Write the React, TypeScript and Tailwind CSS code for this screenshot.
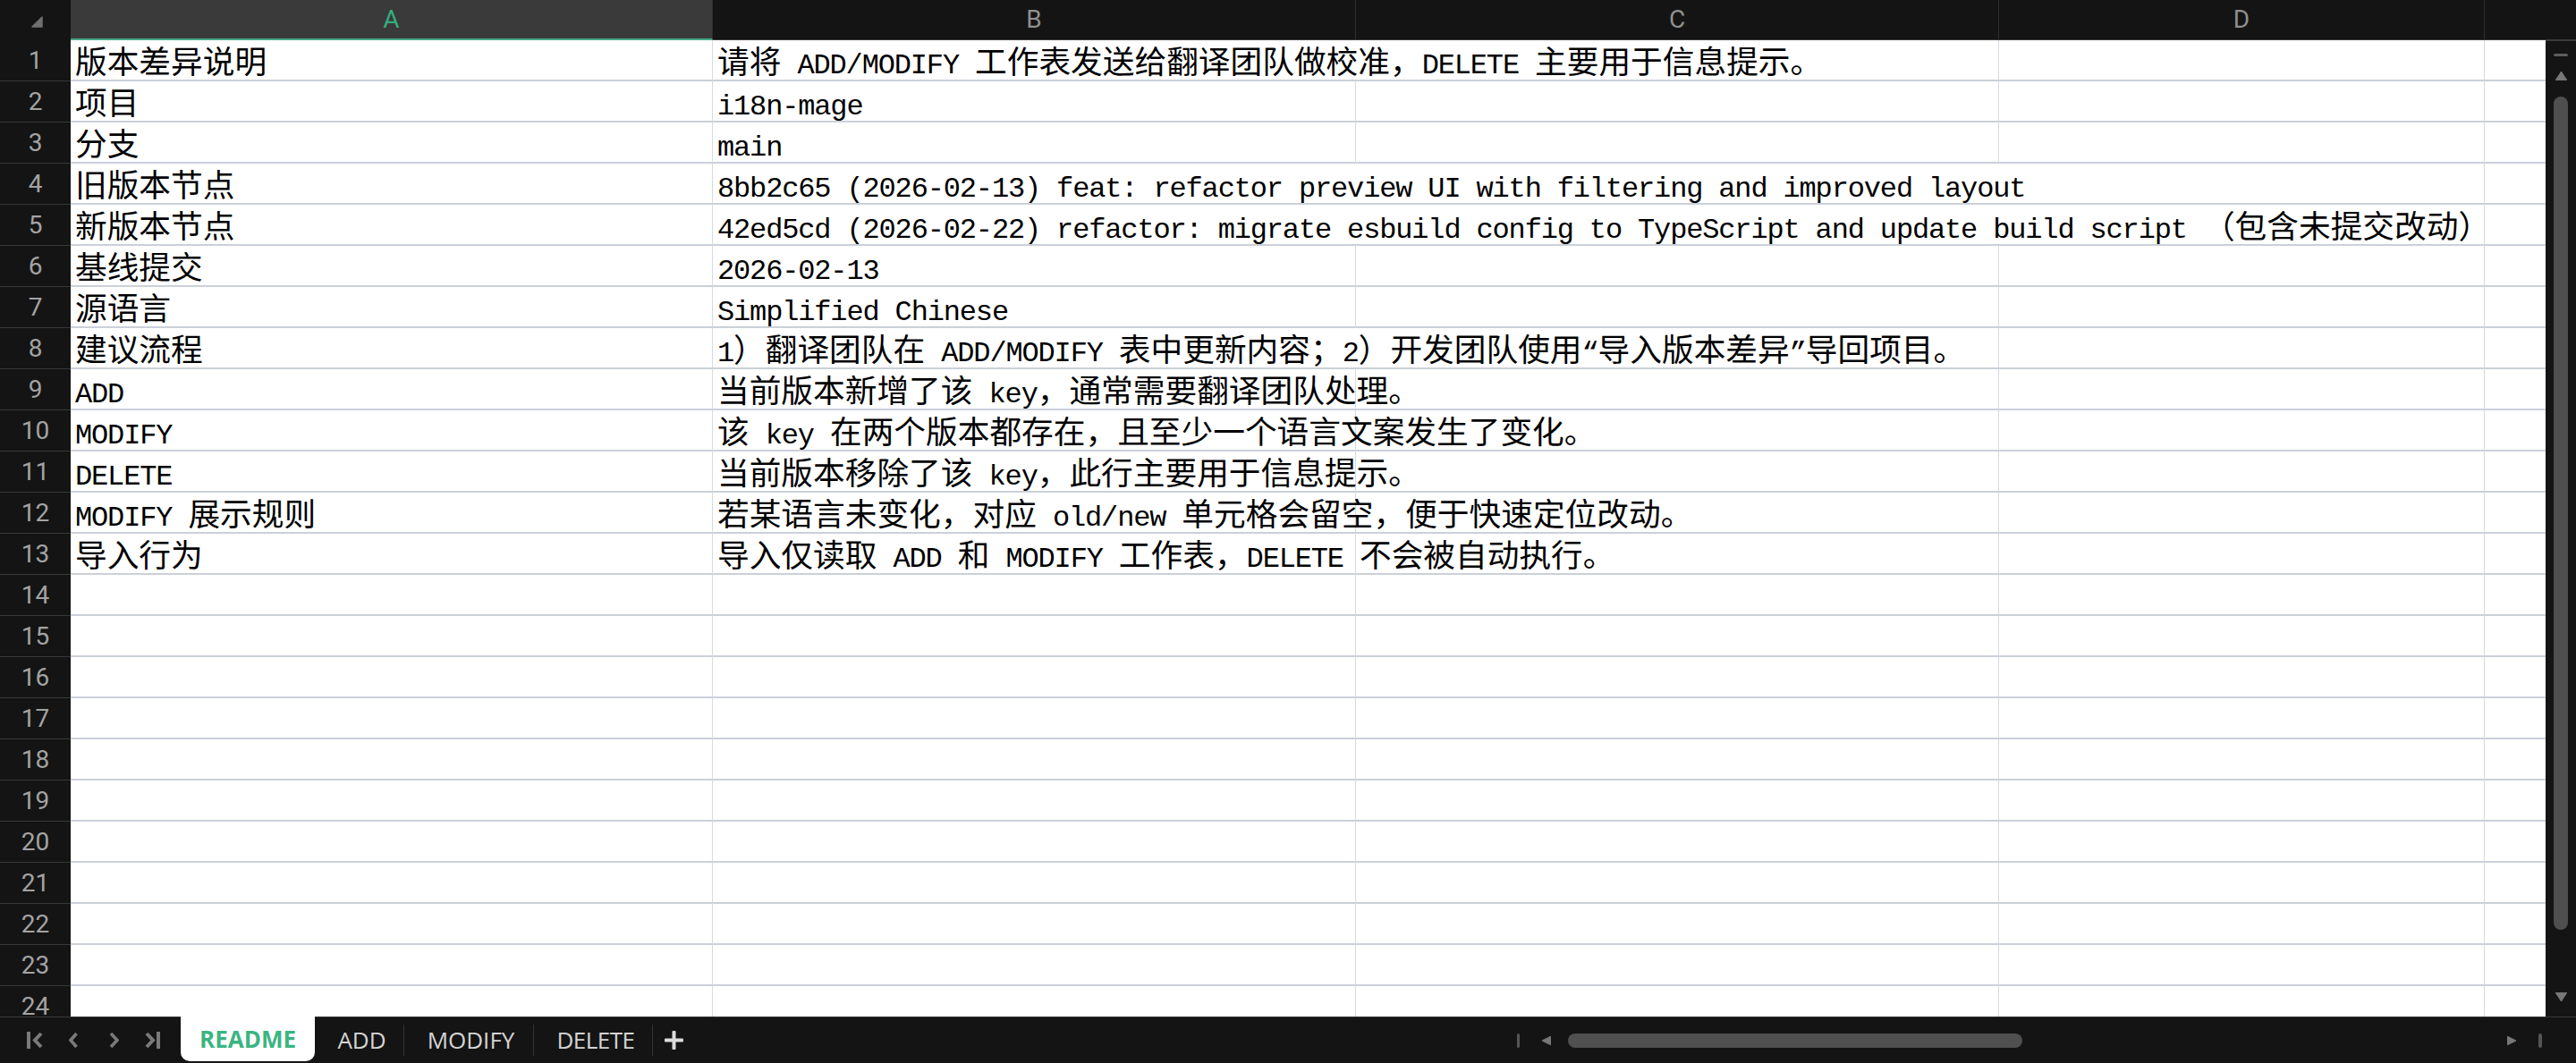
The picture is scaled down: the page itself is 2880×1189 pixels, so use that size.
import React from 'react';

interface SheetRow {
  label: string;
  value: string;
  span?: number;
}

const rows: SheetRow[] = [
  { label: '版本差异说明', value: '请将 ADD/MODIFY 工作表发送给翻译团队做校准，DELETE 主要用于信息提示。', span: 1 },
  { label: '项目', value: 'i18n-mage' },
  { label: '分支', value: 'main' },
  { label: '旧版本节点', value: '8bb2c65 (2026-02-13) feat: refactor preview UI with filtering and improved layout', span: 2 },
  { label: '新版本节点', value: '42ed5cd (2026-02-22) refactor: migrate esbuild config to TypeScript and update build script （包含未提交改动）', span: 2 },
  { label: '基线提交', value: '2026-02-13' },
  { label: '源语言', value: 'Simplified Chinese' },
  { label: '建议流程', value: '1）翻译团队在 ADD/MODIFY 表中更新内容；2）开发团队使用“导入版本差异”导回项目。', span: 1 },
  { label: 'ADD', value: '当前版本新增了该 key，通常需要翻译团队处理。' },
  { label: 'MODIFY', value: '该 key 在两个版本都存在，且至少一个语言文案发生了变化。' },
  { label: 'DELETE', value: '当前版本移除了该 key，此行主要用于信息提示。' },
  { label: 'MODIFY 展示规则', value: '若某语言未变化，对应 old/new 单元格会留空，便于快速定位改动。' },
  { label: '导入行为', value: '导入仅读取 ADD 和 MODIFY 工作表，DELETE 不会被自动执行。' },
];

const colWidths = ['w-[718px]', 'w-[719px]', 'w-[719px]', 'w-[543px]', 'flex-1'];
const headers = ['A', 'B', 'C', 'D', ''];

// half-width chars (ascii + curly quotes) go in a mono face, the rest in the CJK face
const HALF = /^[\x00-\x7F\u201C\u201D]/;

function CellText({ text }: { text: string }) {
  const parts = text.match(/[\x00-\x7F\u201C\u201D]+|[^\x00-\x7F\u201C\u201D]+/g) || [];
  return (
    <>
      {parts.map((p, i) =>
        HALF.test(p) ? (
          <span key={i} className="font-['Liberation_Mono',monospace] text-[32px] tracking-[-1.15px] leading-[30px] whitespace-pre">
            {p}
          </span>
        ) : (
          <span key={i}>{p}</span>
        )
      )}
    </>
  );
}

function Cell({ col, text, hideRight }: { col: number; text?: string; hideRight: boolean }) {
  const border = col < 4 && !hideRight ? 'border-r border-[#d6dae3]' : '';
  return (
    <div
      className={`${colWidths[col]} ${border} min-w-0 h-full border-b-2 border-b-[#cbd0d9] pl-[5px] whitespace-nowrap overflow-visible font-['Noto_Sans_CJK_SC',sans-serif] text-[35.7px] leading-[44px] text-black`}
    >
      {text && <CellText text={text} />}
    </div>
  );
}

function GridRow({ index, row }: { index: number; row?: SheetRow }) {
  const span = row?.span ?? 0;
  return (
    <div className="flex h-[46px] shrink-0">
      <div className="w-[79px] shrink-0 h-full bg-[#141414] border-b border-[#383838] flex items-center justify-center font-['Roboto',sans-serif] text-[28px] text-[#a3a3a3]">
        {index}
      </div>
      {[0, 1, 2, 3, 4].map((c) => (
        <Cell
          key={c}
          col={c}
          text={c === 0 ? row?.label : c === 1 ? row?.value : undefined}
          hideRight={c >= 1 && c < 1 + span}
        />
      ))}
    </div>
  );
}

function Triangle({ dir }: { dir: 'up' | 'down' | 'left' | 'right' }) {
  const pts = {
    up: '6.5,0 13,10 0,10',
    down: '0,0 13,0 6.5,10',
    left: '10,0 10,10 0,5',
    right: '0,0 10,5 0,10',
  }[dir];
  const box = dir === 'up' || dir === 'down' ? '0 0 13 10' : '0 0 10 10';
  return (
    <svg viewBox={box} className={dir === 'up' || dir === 'down' ? 'w-[13px] h-[10px]' : 'w-[10px] h-[10px]'}>
      <polygon points={pts} fill="#777" strokeLinejoin="round" stroke="#777" strokeWidth="1" />
    </svg>
  );
}

function SheetNav() {
  return (
    <div className="w-[202px] shrink-0 flex items-center pl-[30px] text-[#7a7a7a]">
      <svg viewBox="0 0 18 19" className="w-[18px] h-[19px]">
        <rect x="0" y="0" width="4" height="19" fill="currentColor" />
        <polyline points="16,2 9,9.5 16,17" fill="none" stroke="currentColor" strokeWidth="4" />
      </svg>
      <svg viewBox="0 0 10 19" className="w-[10px] h-[19px] ml-[29px]">
        <polyline points="8.5,2 2,9.5 8.5,17" fill="none" stroke="currentColor" strokeWidth="3.6" />
      </svg>
      <svg viewBox="0 0 11 19" className="w-[11px] h-[19px] ml-[35px]">
        <polyline points="2,2 9,9.5 2,17" fill="none" stroke="currentColor" strokeWidth="3.6" />
      </svg>
      <svg viewBox="0 0 18 19" className="w-[18px] h-[19px] ml-[29px]">
        <polyline points="2,2 9,9.5 2,17" fill="none" stroke="currentColor" strokeWidth="4" />
        <rect x="13" y="0" width="4" height="19" fill="currentColor" />
      </svg>
    </div>
  );
}

export default function App() {
  const bodyRows = Array.from({ length: 24 }, (_, i) => i);

  return (
    <div className="w-[2880px] h-[1189px] flex flex-col overflow-hidden bg-[#141414] select-none">
      {/* column headers */}
      <div className="flex h-[45px] shrink-0">
        <div className="w-[79px] shrink-0 h-full flex items-start justify-start">
          <svg viewBox="0 0 14 14" className="w-[13px] h-[13px] mt-[18px] ml-[35px]">
            <polygon points="13,1 13,13 1,13" fill="#6f6f6f" stroke="#6f6f6f" strokeWidth="1.5" strokeLinejoin="round" />
          </svg>
        </div>
        {headers.map((h, i) => (
          <div
            key={i}
            className={`${colWidths[i]} min-w-0 h-full flex items-center justify-center font-['Roboto',sans-serif] text-[28px] ${
              i === 0
                ? 'bg-[#3a3a3a] text-[#34ad7d] border-b-2 border-[#46a985]'
                : 'text-[#8f8f8f] border-b border-[#3a3a3a]'
            } ${i < 4 ? 'border-r border-r-[#2e2e2e]' : ''}`}
          >
            {h}
          </div>
        ))}
      </div>

      {/* grid + vertical scrollbar */}
      <div className="flex flex-1 min-h-0">
        <div className="flex-1 min-w-0 overflow-hidden bg-white flex flex-col">
          {bodyRows.map((i) => (
            <GridRow key={i} index={i + 1} row={rows[i]} />
          ))}
        </div>
        <div className="w-[34px] shrink-0 bg-[#141414] border-t border-[#3a3a3a] flex flex-col items-center">
          <div className="w-[16px] h-[3px] rounded-full bg-[#5c5c5c] mt-[14px]" />
          <div className="mt-[17px] flex">
            <Triangle dir="up" />
          </div>
          <div className="w-[16px] h-[932px] rounded-full bg-[#4f4f4f] mt-[18px]" />
          <div className="mt-[70px] flex">
            <Triangle dir="down" />
          </div>
        </div>
      </div>

      {/* sheet tabs + horizontal scrollbar */}
      <div className="h-[52px] shrink-0 flex items-center border-t border-[#3a3a3a] bg-[#141414]">
        <SheetNav />
        <div className="w-[150px] h-[50px] self-start -mt-px bg-white rounded-b-[10px] flex items-center justify-center font-['Open_Sans',sans-serif] font-bold text-[26px] text-[#3bb482]">
          README
        </div>
        <div className="w-[100px] h-[35px] pl-[6px] flex items-center justify-center border-r border-[#333] font-['Open_Sans',sans-serif] text-[26px] text-[#d4d4d4]">
          ADD
        </div>
        <div className="w-[145px] h-[35px] pl-[5px] flex items-center justify-center border-r border-[#333] font-['Open_Sans',sans-serif] text-[26px] text-[#d4d4d4]">
          MODIFY
        </div>
        <div className="w-[133px] h-[35px] pl-[6px] flex items-center justify-center border-r border-[#333] font-['Open_Sans',sans-serif] text-[26px] tracking-[-0.5px] text-[#d4d4d4]">
          DELETE
        </div>
        <svg viewBox="0 0 21 21" className="w-[21px] h-[21px] ml-[13px]">
          <rect x="8.5" y="0" width="4" height="21" rx="1" fill="#dcdcdc" />
          <rect x="0" y="8.5" width="21" height="4" rx="1" fill="#dcdcdc" />
        </svg>

        <div className="ml-auto flex items-center pr-[38px]">
          <div className="w-[3px] h-[16px] rounded-full bg-[#555]" />
          <div className="ml-[25px] flex">
            <Triangle dir="left" />
          </div>
          <div className="ml-[19px] w-[1037px] flex">
            <div className="w-[508px] h-[16px] rounded-full bg-[#505050]" />
          </div>
          <div className="ml-[13px] flex">
            <Triangle dir="right" />
          </div>
          <div className="ml-[25px] w-[4px] h-[16px] rounded-full bg-[#555]" />
        </div>
      </div>
    </div>
  );
}
